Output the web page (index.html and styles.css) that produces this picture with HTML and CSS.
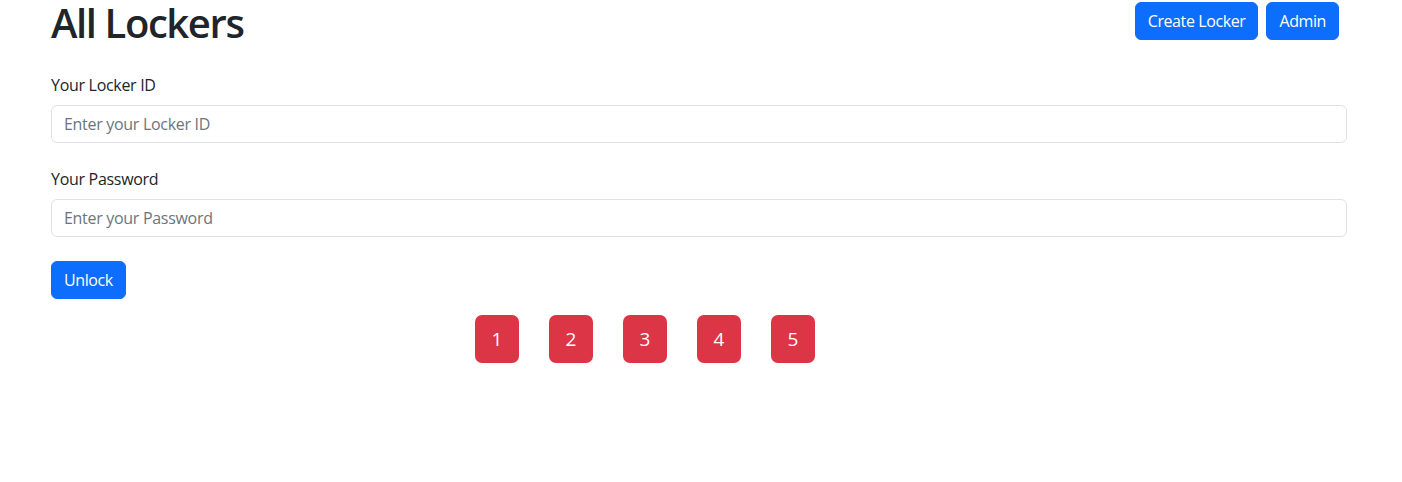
FILE: index.html
```html
<!DOCTYPE html>
<html lang="en">
<head>
<meta charset="utf-8">
<title>All Lockers</title>
<link rel="stylesheet" href="styles.css">
</head>
<body>
<div class="container">
  <header class="header">
    <h1 class="title">All Lockers</h1>
    <div class="actions">
      <button class="btn btn-primary">Create Locker</button>
      <button class="btn btn-primary">Admin</button>
    </div>
  </header>
  <form class="form">
    <div class="field">
      <label class="label" for="locker">Your Locker ID</label>
      <input class="input" id="locker" type="text" placeholder="Enter your Locker ID">
    </div>
    <div class="field">
      <label class="label" for="password">Your Password</label>
      <input class="input" id="password" type="password" placeholder="Enter your Password">
    </div>
    <button type="button" class="btn btn-primary">Unlock</button>
  </form>
  <div class="lockers">
    <div class="locker">1</div>
    <div class="locker">2</div>
    <div class="locker">3</div>
    <div class="locker">4</div>
    <div class="locker">5</div>
  </div>
</div>
</body>
</html>
```

FILE: styles.css
```css
* { box-sizing: border-box; }
html, body { margin: 0; padding: 0; }
body {
  font-family: "Open Sans", "Noto Sans", sans-serif;
  font-size: 16px;
  line-height: 1.5;
  color: #212529;
  background: #fff;
}
.container {
  width: 1296px;
  margin-left: 51px;
}
.header {
  display: flex;
  justify-content: space-between;
  align-items: flex-start;
  height: 73px;
}
.title {
  margin: 0;
  font-size: 40px;
  font-weight: 600;
  line-height: 46px;
  letter-spacing: -1.4px;
}
.actions {
  display: flex;
  gap: 8px;
  margin-top: 2px;
  margin-right: 8px;
}
.btn {
  font-family: inherit;
  font-size: 16px;
  line-height: 24px;
  padding: 6px 12px;
  border: 1px solid transparent;
  border-radius: 6px;
  cursor: pointer;
  letter-spacing: -0.4px;
}
.btn-primary {
  background: #0d6efd;
  border-color: #0d6efd;
  color: #fff;
}
.form {
  display: flex;
  flex-direction: column;
  align-items: flex-start;
  gap: 24px;
}
.field {
  display: flex;
  flex-direction: column;
  width: 100%;
}
.label {
  margin-bottom: 8px;
  letter-spacing: -0.3px;
}
.input {
  width: 100%;
  font-family: inherit;
  font-size: 16px;
  line-height: 24px;
  padding: 6px 12px;
  border: 1px solid #dee2e6;
  border-radius: 6px;
  color: #212529;
  letter-spacing: -0.3px;
}
.input::placeholder { color: #6c757d; }
.lockers {
  display: flex;
  gap: 30px;
  margin-top: 16px;
  margin-left: 424px;
}
.locker {
  width: 44px;
  height: 48px;
  display: flex;
  align-items: center;
  justify-content: center;
  background: #dc3545;
  color: #fff;
  border-radius: 7px;
  font-size: 19px;
}
```
